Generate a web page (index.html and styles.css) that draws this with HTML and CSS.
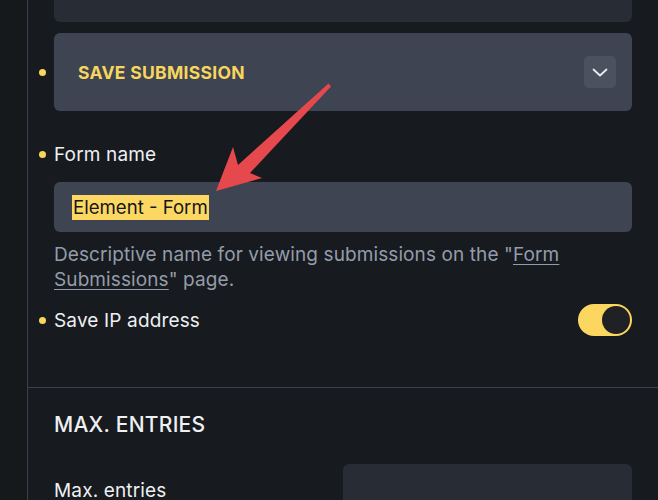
FILE: index.html
```html
<!DOCTYPE html>
<html>
<head>
<meta charset="utf-8">
<link rel="stylesheet" href="styles.css">
</head>
<body>
<div class="app">
  <aside class="rail"></aside>
  <main class="panel">
    <section class="group">
      <div class="row">
        <span class="mark"></span>
        <div class="card card-top"></div>
      </div>
      <div class="row row-card">
        <span class="mark"><i class="dot"></i></span>
        <div class="card card-save">
          <span class="card-title">SAVE SUBMISSION</span>
          <button class="chev" type="button">
            <svg width="16" height="9" viewBox="0 0 16 9"><path d="M1.5 1.5 L8 7.5 L14.5 1.5" fill="none" stroke="#e9ecf1" stroke-width="1.8" stroke-linecap="round" stroke-linejoin="round"/></svg>
          </button>
        </div>
      </div>
      <div class="row row-label">
        <span class="mark"><i class="dot"></i></span>
        <label class="label">Form name</label>
      </div>
      <div class="row">
        <span class="mark"></span>
        <div class="input"><span class="sel">Element - Form</span></div>
      </div>
      <div class="row">
        <span class="mark"></span>
        <p class="help">Descriptive name for viewing submissions on the "<a href="#">Form</a> <a href="#">Submissions</a>" page.</p>
      </div>
      <div class="row row-toggle">
        <span class="mark"><i class="dot"></i></span>
        <span class="label">Save IP address</span>
        <span class="toggle"><span class="knob"></span></span>
      </div>
    </section>
    <section class="group group-max">
      <h2 class="heading">MAX. ENTRIES</h2>
      <div class="max-row">
        <span class="label">Max. entries</span>
        <div class="num"></div>
      </div>
    </section>
  </main>
</div>
<svg class="arrow" width="658" height="500" viewBox="0 0 658 500">
  <path d="M216 191 L233 147 L238 165 L328.5 83.5 L331 86.5 L250 173 L262 178 Z" fill="#e5484d"/>
</svg>
</body>
</html>
```

FILE: styles.css
```css
html, body {
  margin: 0;
  padding: 0;
  background: #171a1e;
  font-family: Inter, "Noto Sans", sans-serif;
  color: #eef0f3;
  overflow: hidden;
}
.app {
  display: flex;
  width: 658px;
  height: 500px;
}
.rail {
  width: 27px;
  flex: none;
  border-right: 1px solid #3a3f48;
  background: #16191c;
}
.panel {
  flex: 1;
  display: flex;
  flex-direction: column;
}
.group {
  padding-right: 26px;
  display: flex;
  flex-direction: column;
}
.row {
  display: flex;
  align-items: center;
}
.mark {
  width: 26px;
  flex: none;
  display: flex;
  justify-content: center;
  padding-left: 2px;
  box-sizing: border-box;
}
.dot {
  width: 7px;
  height: 7px;
  border-radius: 50%;
  background: #f8d65e;
}
.card {
  flex: 1;
  border-radius: 6px;
  background: #3e4451;
}
.card-top {
  height: 22px;
  background: #282d35;
  border-radius: 0 0 6px 6px;
}
.row-card {
  margin-top: 11px;
}
.card-save {
  height: 78px;
  display: flex;
  align-items: center;
  justify-content: space-between;
  padding: 0 16px 0 24px;
}
.card-title {
  color: #f8d65e;
  font-weight: 700;
  font-size: 17.5px;
  letter-spacing: 0.3px;
}
.chev {
  width: 32px;
  height: 32px;
  border: 0;
  border-radius: 5px;
  background: #4a5260;
  display: flex;
  align-items: center;
  justify-content: center;
  padding: 0;
}
.row-label {
  margin-top: 30px;
  height: 26px;
}
.label {
  font-size: 19px;
  letter-spacing: 0.15px;
  color: #eef0f3;
  flex: 1;
}
.input {
  margin-top: 15px;
  flex: 1;
  height: 50px;
  border-radius: 6px;
  background: #3e4451;
  display: flex;
  align-items: center;
  padding-left: 18px;
}
.sel {
  background: #fcd862;
  color: #141619;
  font-size: 18.6px;
  line-height: 25px;
  padding: 0 1px;
}
.help {
  margin: 10px 0 0;
  font-size: 19px;
  letter-spacing: 0.1px;
  line-height: 25px;
  color: #949cab;
}
.help a {
  color: #949cab;
  text-decoration: underline;
  text-underline-offset: 3px;
}
.row-toggle {
  margin-top: 11px;
  height: 34px;
}
.toggle {
  width: 54px;
  height: 32px;
  border-radius: 16px;
  background: #fbd760;
  display: flex;
  align-items: center;
  justify-content: flex-end;
  padding-right: 2px;
  box-sizing: border-box;
}
.knob {
  width: 28px;
  height: 28px;
  border-radius: 50%;
  background: #1f2125;
}
.group-max {
  margin-top: 50px;
  border-top: 1px solid #3a3f48;
  padding-left: 26px;
}
.heading {
  margin: 23px 0 0;
  font-size: 21px;
  font-weight: 500;
  letter-spacing: 0.25px;
  line-height: 28px;
}
.max-row {
  display: flex;
  align-items: flex-start;
  margin-top: 25px;
}
.max-row .label {
  margin-top: 15px;
}
.num {
  width: 289px;
  height: 60px;
  border-radius: 6px;
  background: #282d35;
}
.arrow {
  position: absolute;
  left: 0;
  top: 0;
  pointer-events: none;
}
```
